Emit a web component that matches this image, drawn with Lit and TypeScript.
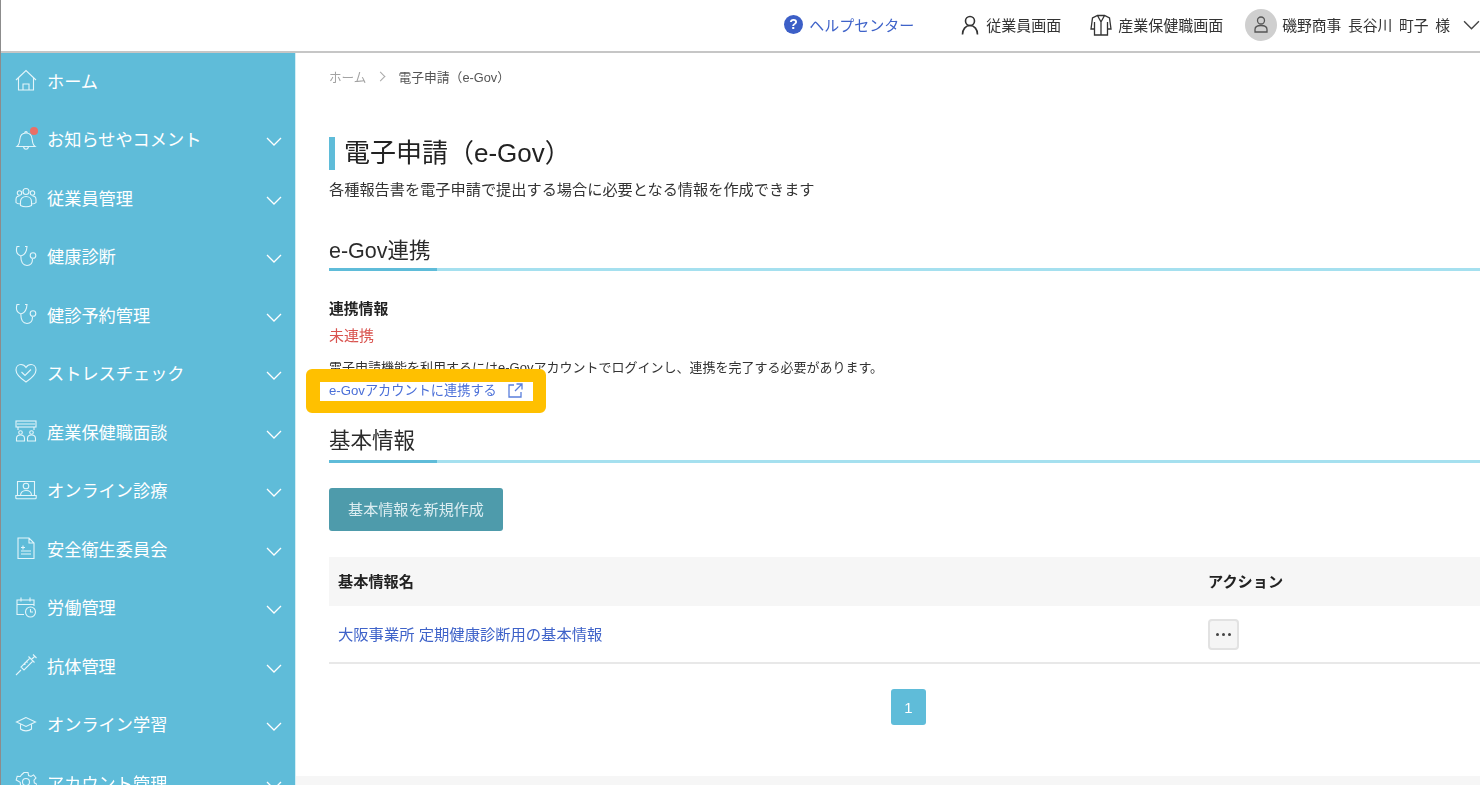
import { LitElement, html, css, svg } from "lit";
import { customElement } from "lit/decorators.js";

const chevron = html`<svg class="chev" viewBox="0 0 16 9" fill="none" stroke="currentColor" stroke-width="1.3"><path d="M1 1l7 7 7-7" /></svg>`;

// sidebar icons, all drawn on a 22x22 box
const icons: Record<string, unknown> = {
  home: svg`<path d="M1 11L11 1.500 21 11M3.500 9v12h15V9M8 21v-6h6v6" />`,
  bell: svg`<path d="M2 18.500c2-1.500 2.500-3.500 2.800-7C5.100 7.500 7.500 5 11 5s5.900 2.500 6.200 6.500c.3 3.500.8 5.500 2.800 7zM8.500 18.700c.3 1.800 1.300 2.600 2.500 2.600s2.200-.8 2.500-2.600M9.800 5c-.3-2 2.700-2 2.400 0" />`,
  people: svg`<circle cx="11" cy="5.500" r="3" /><circle cx="4.500" cy="7" r="2.200" /><circle cx="17.500" cy="7" r="2.200" /><path d="M5.500 19.500v-4c0-3 2.500-5 5.500-5s5.500 2 5.500 5v4c-3 1.500-8 1.500-11 0zM5.500 18c-2 0-4-.8-4.500-1.500v-3c0-2 1.500-3.500 3.500-3.500M16.500 18c2 0 4-.8 4.500-1.500v-3c0-2-1.500-3.500-3.500-3.500" />`,
  steth: svg`<path d="M4.500 1.500H2C1 5 1.500 9 5 10.500c3 1 5.500-2 6.500-5.500l.5-3.500h-2M5.800 10.800c0 5 1.700 9.700 6.200 9.700 3.500 0 5.500-2.500 5.500-6.500" /><circle cx="18" cy="10.500" r="2.800" />`,
  heart: svg`<path d="M11 20C5 16 1 12.500 1 8c0-3.500 2.500-5.500 5-5.500 2 0 3.800 1 5 3 1.200-2 3-3 5-3 2.500 0 5 2 5 5.500 0 4.500-4 8-10 12z" /><path d="M6.500 10l3.500 3.500 6-6" />`,
  meeting: svg`<rect x="1" y="1" width="20" height="6" /><path d="M2 4h18M3 7v3M19 7v3" /><circle cx="5.500" cy="12.500" r="1.800" /><circle cx="16.500" cy="12.500" r="1.800" /><path d="M1.500 21v-2.500c0-2 1.500-3.500 4-3.500s4 1.500 4 3.500V21zM12.500 21v-2.500c0-2 1.500-3.500 4-3.500s4 1.500 4 3.500V21z" />`,
  laptop: svg`<path d="M2.500 16.500V2.500h17v14M.8 16.500h20.400v2.200c0 .6-.4 1-1 1H1.800c-.6 0-1-.4-1-1z" /><circle cx="11" cy="7" r="2.800" /><path d="M5.500 16.500c0-3 2-5 5.500-5s5.500 2 5.500 5" />`,
  doc: svg`<path d="M3 1h11l5 5v15.500H3zM14 1v5h5M6 14h10M6 17h10M6 10.500h4M8 8.500v4" />`,
  calendar: svg`<path d="M9 18.500H2V4h17v6M2 8.500h17M6 1.500v4M15 1.500v4" /><circle cx="15.500" cy="16" r="5" /><path d="M15.500 13v3h2.500" />`,
  syringe: svg`<path d="M1 21l5-5M6 13l3 3L18 7l-3-3zM13.500 2.500l6 6M16.500 5.500L20 2M18 .5l3.500 3.500M9 9l1.500 1.500M11 7l1.500 1.500" />`,
  cap: svg`<path d="M11 4.500L1.500 9l9.500 4.500L20.500 9zM5.500 11.500v4.500c3 2.500 8 2.500 11 0v-4.500" />`,
  gear: svg`<circle cx="11" cy="11" r="3.500" /><path d="M9 1.500h4l.6 3 2.400 1 2.600-1.600 2.400 3-2 2.300.3 2.600 2.500 1.400-1 3.600-3-.2-1.700 2-.6 3h-4l-.6-3-2.400-1-2.600 1.600-2.400-3 2-2.300-.3-2.600L1.200 8.900l1-3.600 3 .2 1.700-2z" />`,
};

const menu = [
  { label: "ホーム", icon: "home", open: false },
  { label: "お知らせやコメント", icon: "bell", open: true, dot: true },
  { label: "従業員管理", icon: "people", open: true },
  { label: "健康診断", icon: "steth", open: true },
  { label: "健診予約管理", icon: "steth", open: true },
  { label: "ストレスチェック", icon: "heart", open: true },
  { label: "産業保健職面談", icon: "meeting", open: true },
  { label: "オンライン診療", icon: "laptop", open: true },
  { label: "安全衛生委員会", icon: "doc", open: true },
  { label: "労働管理", icon: "calendar", open: true },
  { label: "抗体管理", icon: "syringe", open: true },
  { label: "オンライン学習", icon: "cap", open: true },
  { label: "アカウント管理", icon: "gear", open: true },
];

@customElement("app-root")
export class AppRoot extends LitElement {
  static styles = css`
    :host {
      display: block;
      height: 785px;
      overflow: hidden;
      background: #fff;
      color: #2b2b2b;
      font-family: "Liberation Sans", "Noto Sans CJK JP", sans-serif;
    }
    .app {
      height: 785px;
      display: flex;
      flex-direction: column;
      border-left: 1px solid #8c8c8c;
      box-sizing: border-box;
      filter: blur(0.45px);
    }
    header {
      flex: none;
      height: 53px;
      box-sizing: border-box;
      padding-bottom: 2px;
      display: flex;
      align-items: center;
      justify-content: flex-end;
      border-bottom: 2px solid #c6c6c6;
      font-size: 15px;
      color: #333;
    }
    .head-item {
      display: flex;
      align-items: center;
    }
    .help {
      color: #3f63c9;
      gap: 6px;
      margin-right: 47px;
    }
    .help-mark {
      width: 19px;
      height: 19px;
      border-radius: 50%;
      background: #3c5fc7;
      color: #fff;
      font: 700 14px/19px "Liberation Sans", sans-serif;
      text-align: center;
    }
    .staff {
      gap: 7px;
      margin-right: 29px;
    }
    .staff svg {
      width: 18px;
      height: 20px;
    }
    .nurse {
      gap: 6px;
      margin-right: 22px;
    }
    .nurse svg {
      width: 22px;
      height: 22px;
    }
    .user {
      gap: 5px;
    }
    .avatar {
      width: 32px;
      height: 32px;
      border-radius: 50%;
      background: #cfcfcf;
      display: flex;
      align-items: center;
      justify-content: center;
    }
    .avatar svg {
      width: 14px;
      height: 17px;
    }
    .user-name {
      font-size: 14.8px;
      word-spacing: 2.5px;
    }
    .user .chev {
      width: 17px;
      height: 10px;
      margin-left: 8px;
      color: #444;
    }
    .body {
      flex: 1;
      min-height: 0;
      display: flex;
    }
    nav {
      flex: none;
      width: 294px;
      background: #5fbcd9;
      color: #fff;
      border-right: 1px solid #d4eef5;
    }
    .nav-row {
      height: 58.5px;
      box-sizing: border-box;
      display: flex;
      align-items: center;
      padding: 0 13px 4px 14px;
      font-size: 17.2px;
    }
    .nav-icon {
      position: relative;
      width: 22px;
      height: 22px;
      flex: none;
      margin-right: 10px;
    }
    .nav-icon svg {
      width: 22px;
      height: 22px;
      fill: none;
      stroke: #e4f5fa;
      stroke-width: 1.1;
      display: block;
    }
    .dot {
      position: absolute;
      top: -1px;
      right: -1px;
      width: 8px;
      height: 8px;
      border-radius: 50%;
      background: #ea6f66;
    }
    .nav-row .chev {
      width: 16px;
      height: 9px;
      margin: 6px 0 0 auto;
    }
    main {
      flex: 1;
      min-width: 0;
      display: flex;
      flex-direction: column;
      padding-left: 33px;
    }
    main > * {
      flex: none;
    }
    .crumbs {
      margin-top: 13px;
      height: 20px;
      display: flex;
      align-items: center;
      font-size: 12.8px;
      color: #555;
    }
    .crumbs .home {
      color: #a3a3a3;
      font-size: 12.6px;
    }
    .crumbs .sep {
      width: 6px;
      height: 6px;
      margin: 0 14px 0 11px;
      border: solid #a9a9a9;
      border-width: 1px 1px 0 0;
      transform: rotate(45deg);
    }
    h1 {
      margin: 51px 0 0;
      height: 33px;
      border-left: 6px solid #5fbcd9;
      padding-left: 9px;
      font-size: 26px;
      font-weight: 400;
      line-height: 33px;
      color: #222;
    }
    .lead {
      margin: 9px 0 0;
      font-size: 15.2px;
      line-height: 22px;
      color: #333;
    }
    h2 {
      margin: 0;
      font-size: 21.5px;
      font-weight: 400;
      line-height: 30px;
      color: #2b2b2b;
      border-bottom: 3px solid #a5e0ef;
      position: relative;
    }
    h2::after {
      content: "";
      position: absolute;
      left: 0;
      bottom: -3px;
      width: 108px;
      height: 3px;
      background: #5fbcd9;
    }
    .sec-link {
      margin-top: 35px;
      padding-bottom: 2px;
    }
    .sec-base {
      margin-top: 27px;
      padding-bottom: 4px;
    }
    .label {
      margin-top: 27px;
      font-size: 14.8px;
      font-weight: 700;
      line-height: 22px;
      color: #222;
    }
    .status {
      margin-top: 5px;
      font-size: 15px;
      line-height: 22px;
      color: #d9534f;
    }
    .note {
      margin-top: 11px;
      font-size: 13px;
      line-height: 20px;
      color: #333;
    }
    .link-row {
      position: relative;
      margin-top: 2px;
      height: 19px;
      display: flex;
      align-items: center;
      gap: 11px;
      font-size: 13.2px;
      color: #4a6fd8;
    }
    .link-row svg {
      width: 15px;
      height: 15px;
      margin-top: 2px;
      fill: none;
      stroke: #5a7fdc;
      stroke-width: 1.3;
    }
    /* the callout frame lies over the paragraph above it */
    .callout {
      position: absolute;
      left: -23px;
      top: -11px;
      width: 213px;
      height: 19px;
      border: solid #ffc000;
      border-width: 13px 13px 12px 14px;
      border-radius: 6px;
      pointer-events: none;
    }
    .create {
      margin-top: 25px;
      align-self: flex-start;
      width: 174px;
      height: 43px;
      padding: 0 0 3px;
      border: 0;
      border-radius: 3px;
      background: #4e9bab;
      color: #dcedf1;
      font: inherit;
      font-size: 15.1px;
    }
    .table {
      margin-top: 26px;
      display: grid;
      grid-template-columns: 870px 1fr;
    }
    .th {
      height: 49px;
      box-sizing: border-box;
      background: #f6f6f6;
      display: flex;
      align-items: center;
      padding: 0 0 4px 9px;
      font-size: 15.2px;
      font-weight: 700;
      color: #222;
    }
    .td {
      height: 56px;
      display: flex;
      align-items: center;
      padding-left: 9px;
      border-bottom: 2px solid #e8e8e8;
    }
    .td a {
      color: #3f63c9;
      font-size: 15.3px;
      margin-bottom: 2px;
    }
    .more {
      width: 31px;
      height: 31px;
      padding: 0;
      box-sizing: border-box;
      background: #f5f5f5;
      border: 2px solid #e2e2e2;
      border-radius: 4px;
      display: flex;
      align-items: center;
      justify-content: center;
      gap: 3px;
    }
    .more i {
      width: 3px;
      height: 3px;
      border-radius: 50%;
      background: #444;
    }
    .pager {
      margin: 25px 0 0 562px;
      width: 35px;
      height: 36px;
      border-radius: 3px;
      background: #5fbcd9;
      color: #fff;
      font-size: 15px;
      display: flex;
      align-items: center;
      justify-content: center;
    }
    footer {
      margin: 51px 0 0 -33px;
      height: 9px;
      background: #f6f6f6;
    }
  `;

  render() {
    return html`
      <div class="app">
        <header>
          <div class="head-item help">
            <span class="help-mark">?</span><span>ヘルプセンター</span>
          </div>
          <div class="head-item staff">
            <svg viewBox="0 0 18 20" fill="none" stroke="#333" stroke-width="1.6">
              <circle cx="9" cy="6" r="4.5" />
              <path d="M1.500 19.500c0-5 3-9 7.500-9s7.500 4 7.500 9" />
            </svg>
            <span>従業員画面</span>
          </div>
          <div class="head-item nurse">
            <svg viewBox="0 0 22 22" fill="none" stroke="#333" stroke-width="1.3">
              <path d="M7.500 1.500h7l5 2.500 1.500 11h-3.500V21h-13v-6H1L2.500 4zM7.500 1.500L11 8l3.500-6.500M11 8v13M4.500 8v7M17.500 8v7" />
            </svg>
            <span>産業保健職画面</span>
          </div>
          <div class="head-item user">
            <span class="avatar">
              <svg viewBox="0 0 14 17" fill="none" stroke="#555" stroke-width="1.3">
                <circle cx="7" cy="4.500" r="3.500" />
                <path d="M1 16v-2.500C1 11 3 9.500 7 9.500s6 1.500 6 4V16z" />
              </svg>
            </span>
            <span class="user-name">磯野商事 長谷川 町子 様</span>
            ${chevron}
          </div>
        </header>
        <div class="body">
          <nav>
            ${menu.map(
              (m) => html`
                <div class="nav-row">
                  <span class="nav-icon">
                    <svg viewBox="0 0 22 22">${icons[m.icon]}</svg>
                    ${m.dot ? html`<span class="dot"></span>` : ""}
                  </span>
                  <span>${m.label}</span>
                  ${m.open ? chevron : ""}
                </div>
              `
            )}
          </nav>
          <main>
            <div class="crumbs">
              <span class="home">ホーム</span><span class="sep"></span><span>電子申請（e-Gov）</span>
            </div>
            <h1>電子申請（e-Gov）</h1>
            <p class="lead">各種報告書を電子申請で提出する場合に必要となる情報を作成できます</p>
            <h2 class="sec-link">e-Gov連携</h2>
            <div class="label">連携情報</div>
            <div class="status">未連携</div>
            <div class="note">電子申請機能を利用するにはe-Govアカウントでログインし、連携を完了する必要があります。</div>
            <div class="link-row">
              <span>e-Govアカウントに連携する</span>
              <svg viewBox="0 0 15 15">
                <path d="M6 2H1v12h12V9M8.500 1H14v5.500M14 1L7 8" />
              </svg>
              <span class="callout"></span>
            </div>
            <h2 class="sec-base">基本情報</h2>
            <button class="create">基本情報を新規作成</button>
            <div class="table">
              <div class="th">基本情報名</div>
              <div class="th">アクション</div>
              <div class="td"><a>大阪事業所 定期健康診断用の基本情報</a></div>
              <div class="td">
                <button class="more"><i></i><i></i><i></i></button>
              </div>
            </div>
            <div class="pager">1</div>
            <footer></footer>
          </main>
        </div>
      </div>
    `;
  }
}
